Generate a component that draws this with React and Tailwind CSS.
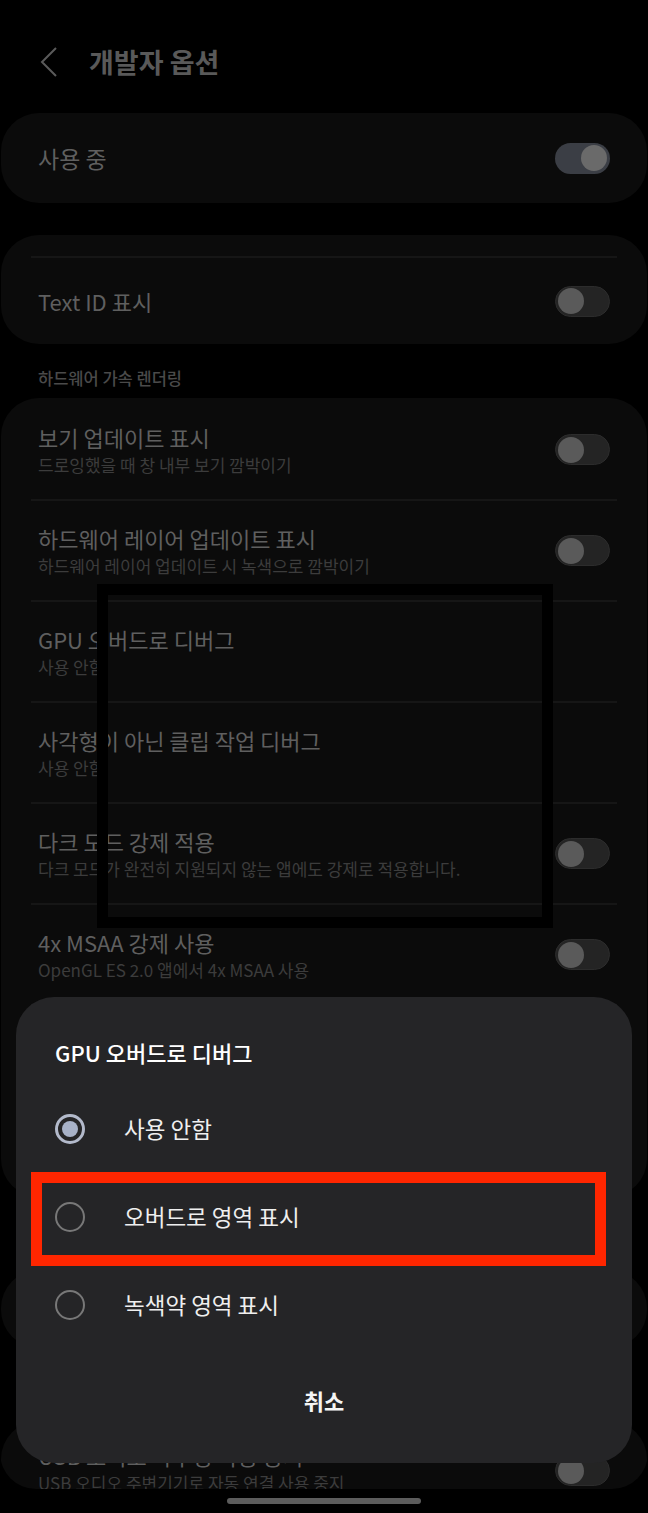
import React from 'react'

const hwRows = [
  { title: '보기 업데이트 표시', sub: '드로잉했을 때 창 내부 보기 깜박이기', toggle: true },
  { title: '하드웨어 레이어 업데이트 표시', sub: '하드웨어 레이어 업데이트 시 녹색으로 깜박이기', toggle: true },
  { title: 'GPU 오버드로 디버그', sub: '사용 안함' },
  { title: '사각형이 아닌 클립 작업 디버그', sub: '사용 안함' },
  { title: '다크 모드 강제 적용', sub: '다크 모드가 완전히 지원되지 않는 앱에도 강제로 적용합니다.', toggle: true },
  { title: '4x MSAA 강제 사용', sub: 'OpenGL ES 2.0 앱에서 4x MSAA 사용', toggle: true },
  // rows below sit behind the dialog
  { title: '', toggle: true },
]

const options = ['사용 안함', '오버드로 영역 표시', '녹색약 영역 표시']

function Toggle({ on }) {
  if (on) {
    return (
      <div className="w-[55px] h-[31px] shrink-0 rounded-full bg-[#3b3e45] flex items-center justify-end px-[3px]">
        <div className="w-[26px] h-[26px] rounded-full bg-[#6a6a6a]" />
      </div>
    )
  }
  return (
    <div className="w-[55px] h-[31px] shrink-0 rounded-full bg-[#242424] border border-[#2c2c2c] flex items-center px-[2px]">
      <div className="w-[26px] h-[26px] rounded-full bg-[#5a5a5a]" />
    </div>
  )
}

function Divider() {
  return <div className="mx-[30px] h-[2px] bg-[#161616]" />
}

function Row({ title, sub, toggle, h = 'h-[99px]' }) {
  return (
    <div className={`${h} flex items-center justify-between px-[37px]`}>
      <div className="pt-[3px]">
        {title && <div className="text-[22px] leading-[28px] text-[#5f5f5f]">{title}</div>}
        {sub && <div className="text-[17px] leading-[28px] text-[#3c3c3c]">{sub}</div>}
      </div>
      {toggle && <Toggle />}
    </div>
  )
}

function Radio({ checked }) {
  return checked ? (
    <div className="w-[30px] h-[30px] shrink-0 rounded-full border-[3px] border-[#b3bacb] flex items-center justify-center">
      <div className="w-[16px] h-[16px] rounded-full bg-[#a8b2c8]" />
    </div>
  ) : (
    <div className="w-[30px] h-[30px] shrink-0 rounded-full border-2 border-[#787878]" />
  )
}

export default function App() {
  return (
    <div className="relative w-[648px] h-[1513px] bg-black overflow-hidden font-['Noto_Sans_CJK_KR','Noto_Sans',sans-serif]">
      <div className="h-[1489px] overflow-hidden rounded-b-[36px]">
        {/* header */}
        <div className="mt-[24px] h-[76px] flex items-center pl-[40px]">
          <svg width="17" height="30" viewBox="0 0 17 30" fill="none" stroke="#5a5a5a" strokeWidth="2">
            <path d="M16 1L2 15l14 14" />
          </svg>
          <span className="ml-[32px] text-[27px] font-bold text-[#595959]">개발자 옵션</span>
        </div>

        <div className="mt-[13px] mx-[1px] h-[90px] rounded-[38px] bg-[#0b0b0b] flex items-center justify-between px-[37px]">
          <span className="text-[23px] text-[#5f5f5f]">사용 중</span>
          <Toggle on />
        </div>

        <div className="mt-[32px] mx-[1px] h-[109px] rounded-[38px] bg-[#0b0b0b] pt-[21px]">
          <Divider />
          <div className="h-[86px] flex items-center justify-between px-[37px]">
            <span className="text-[22px] text-[#5f5f5f]">Text ID 표시</span>
            <Toggle />
          </div>
        </div>

        <div className="h-[54px] pt-[22px] pl-[38px] text-[16.5px] leading-[24px] font-medium text-[#4a4a4a]">하드웨어 가속 렌더링</div>

        <div className="mx-[1px] rounded-[38px] bg-[#0b0b0b] pt-[2px]">
          {hwRows.map((r, i) => (
            <div key={i}>
              <Row {...r} />
              <Divider />
            </div>
          ))}
          <Row h="h-[90px]" toggle />
        </div>

        <div className="h-[73px]" />
        <div className="mx-[1px] h-[78px] rounded-[38px] bg-[#0b0b0b]" />

        <div className="h-[73px]" />
        <div className="mx-[1px] rounded-[38px] bg-[#0b0b0b]">
          <div className="h-[99px] flex items-center justify-between px-[37px]">
            <div className="-mt-[4px]">
              <div className="text-[22px] leading-[28px] text-[#5f5f5f]">USB 오디오 라우팅 사용 중지</div>
              <div className="text-[17px] leading-[28px] text-[#3c3c3c]">USB 오디오 주변기기로 자동 연결 사용 중지</div>
            </div>
            <Toggle />
          </div>
        </div>
      </div>

      {/* nav bar */}
      <div className="h-[24px] flex justify-center pt-[9px]">
        <div className="w-[194px] h-[6px] rounded-full bg-[#5c5c5c]" />
      </div>

      {/* annotation: black box */}
      <div className="absolute left-[97px] top-[584px] w-[456px] h-[344px] border-[11px] border-black" />

      {/* dialog */}
      <div className="absolute left-[16px] top-[997px] w-[616px] h-[466px] rounded-[38px] bg-[#252527] px-[39px] pt-[40px]">
        <div className="text-[22px] leading-[30px] font-medium text-white">GPU 오버드로 디버그</div>
        <div className="mt-[18px]">
          {options.map((o, i) => (
            <div key={o} className="h-[88px] flex items-center gap-[39px]">
              <Radio checked={i === 0} />
              <span className="text-[22.5px] text-[#efefef]">{o}</span>
            </div>
          ))}
        </div>
        <div className="mt-[23px] h-[56px] flex items-center justify-center text-[22px] font-bold text-[#f5f5f5]">취소</div>
      </div>

      {/* annotation: red highlight */}
      <div className="absolute left-[31px] top-[1172px] w-[575px] h-[94px] border-[11px] border-[#ff2600]" />
    </div>
  )
}
